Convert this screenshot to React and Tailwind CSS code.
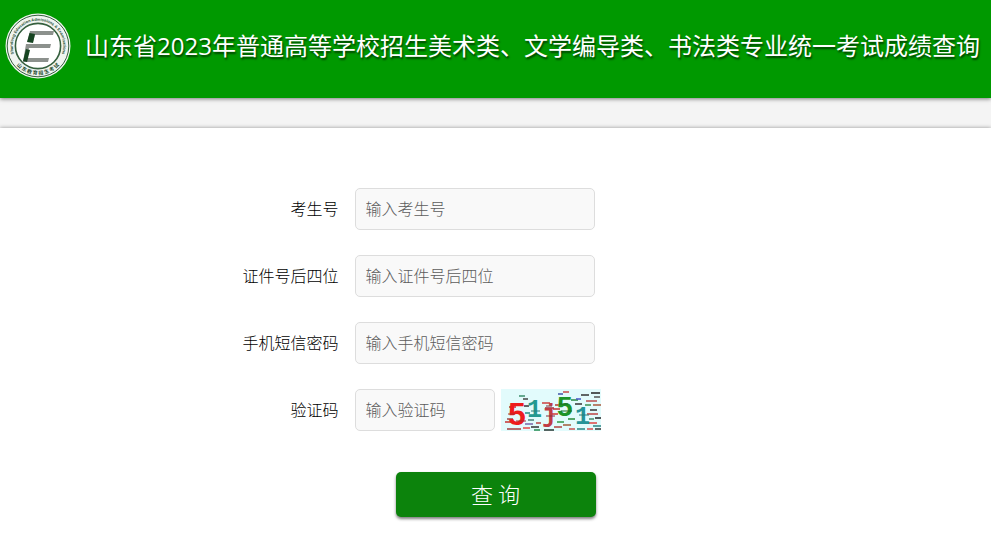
import React, { useState } from 'react';

const FIELDS = [
  { id: 'ksh', label: '考生号', placeholder: '输入考生号' },
  { id: 'zjh', label: '证件号后四位', placeholder: '输入证件号后四位' },
  { id: 'sms', label: '手机短信密码', placeholder: '输入手机短信密码', type: 'password' },
];

const labelClass = 'w-[143px] shrink-0 pb-[3px] text-right text-base font-light text-black';
const inputClass = 'h-[42px] rounded-[5px] border border-[#dddddd] bg-[#f9f9f9] px-[10px] pb-[3px] text-base font-light text-[#333333] placeholder:text-[#5c5c5c] focus:outline-none focus:border-[#009900]';

// noise strokes of the captcha: x, y, length, colour
const NOISE = [
  [18, 7, 6, '#3b8f6c'], [22, 10, 5, '#444'], [10, 15, 9, '#e2362f'], [8, 18, 7, '#a83a3a'], [23, 17, 5, '#333'],
  [41, 14, 8, '#cc4040'], [44, 19, 9, '#993344'], [24, 24, 5, '#248b83'],
  [6, 30, 6, '#9c4848'], [4, 33, 7, '#c43535'], [27, 31, 6, '#4b8278'], [24, 35, 8, '#7766aa'], [6, 40, 14, '#a33d3d'],
  [22, 39, 7, '#e44848'], [30, 38, 8, '#333'], [35, 34, 5, '#b84545'], [33, 41, 6, '#238a50'], [43, 41, 10, '#24332f'],
  [53, 38, 8, '#b34242'], [62, 36, 8, '#a05b38'], [56, 33, 7, '#2f9646'], [50, 25, 7, '#d43535'], [52, 20, 7, '#c52f2f'],
  [54, 16, 6, '#b33b2b'], [57, 5, 5, '#4055aa'], [62, 3, 6, '#c94848'], [70, 11, 7, '#288740'],
  [74, 15, 7, '#333'], [75, 10, 5, '#4455c4'], [80, 6, 8, '#333'], [90, 4, 9, '#222'], [85, 12, 11, '#b94b4b'],
  [93, 8, 6, '#555'], [84, 16, 6, '#3b9151'], [92, 16, 8, '#a9593b'], [89, 21, 7, '#333'],
  [86, 25, 11, '#bd4545'], [94, 29, 6, '#222'], [88, 30, 5, '#488a6c'], [87, 34, 9, '#e04444'], [92, 37, 8, '#2c8585'],
  [94, 40, 6, '#333'], [68, 40, 6, '#c75050'], [76, 40, 8, '#278484'], [86, 40, 6, '#d94d4d'], [67, 30, 7, '#248c38'],
];

function Logo() {
  return (
    <svg viewBox="0 0 66 66" className="size-[66px] shrink-0" role="img" aria-label="山东省教育招生考试院">
      <circle cx="33" cy="33" r="32.5" fill="#f0f4f0" />
      <circle cx="33" cy="33" r="30.8" fill="none" stroke="#345f3d" strokeWidth="1" />
      <circle cx="33" cy="33" r="22.6" fill="#ffffff" stroke="#345f3d" strokeWidth="1.6" />
      <defs>
        <path id="arc-top" d="M 9.5 42 A 25.2 25.2 0 1 1 56.5 42" />
        <path id="arc-bottom" d="M 4.2 33 A 28.8 28.8 0 0 0 61.8 33" />
      </defs>
      <text fontFamily="Liberation Sans, sans-serif" fontWeight="700" fontSize="4" fill="#264e30" textAnchor="middle">
        <textPath href="#arc-top" startOffset="50%">Shandong Education Admissions &amp; Examinations</textPath>
      </text>
      <text fontFamily="Noto Sans CJK SC, sans-serif" fontWeight="700" fontSize="5" fill="#264e30" textAnchor="middle">
        <textPath href="#arc-bottom" startOffset="50%">山 东 教 育 招 生 考 试</textPath>
      </text>
      {/* slanted emblem */}
      <path d="M25 18 H49 L48 22 H30 L28 29 H24 L22.5 28 Z" fill="#8c918d" />
      <path d="M21 31 H46 L45 35 H24 L22 45 H44 L43 49 H18 Z" fill="#8c918d" />
      <path d="M24.5 20 L30 21 L28 30 L22 29 Z M21 36 L25 37 L22 49 L18 48 Z" fill="#174522" />
    </svg>
  );
}

function Captcha() {
  return (
    <svg viewBox="0 0 100 42" className="h-[42px] w-[100px]" aria-hidden="true">
      <rect width="100" height="42" fill="#e2fbfc" />
      <g strokeWidth="1.5">
        {NOISE.map(([x, y, w, color]) => (
          <path key={`${x}-${y}`} d={`M${x} ${y}h${w}`} stroke={color} />
        ))}
      </g>
      <g fontFamily="Liberation Mono, monospace" fontWeight="700" fontSize="25">
        <text x="7" y="36" fontFamily="Liberation Sans, sans-serif" fontSize="32" fill="#ee1c1c">5</text>
        <text x="26" y="28" fill="#239990">1</text>
        <text x="41" y="33" fill="#c03c45">j</text>
        <text x="56" y="27" fontFamily="Liberation Sans, sans-serif" fontSize="28" fill="#1c9428">5</text>
        <text x="74" y="35" fill="#259398">1</text>
      </g>
      <g strokeWidth="1">
        <path d="M7 25h7M15 32h10" stroke="#a92f2f" />
        <path d="M30 22h9M78 26h10" stroke="#257d7b" />
        <path d="M45 27h9M45 17h6" stroke="#842f3b" />
        <path d="M58 15h9M60 22h11" stroke="#176d25" />
      </g>
    </svg>
  );
}

export default function App() {
  const [form, setForm] = useState({ ksh: '', zjh: '', sms: '', code: '' });

  const setFormField = (k, v) => setForm(p => ({ ...p, [k]: v }));

  return (
    <div className="flex min-h-screen flex-col bg-[#f4f4f4] font-['Noto_Sans_CJK_SC',sans-serif] text-[#333333]">
      {/* Header */}
      <header className="flex min-h-[98px] items-start gap-[14px] bg-[#009900] pt-[13px] pl-[5px] shadow-[0_1px_4px_rgba(0,0,0,0.5)]">
        <Logo />
        <h1 className="pt-[15px] font-['Open_Sans','Noto_Sans_CJK_SC',sans-serif] text-2xl leading-9 text-white [text-shadow:1px_2px_2px_rgba(0,0,0,0.6)]">
          山东省2023年普通高等学校招生美术类、文学编导类、书法类专业统一考试成绩查询
        </h1>
      </header>

      {/* Query form */}
      <main className="mt-[30px] grow bg-white pt-[60px] pb-[27px] shadow-[0_0_4px_rgba(0,0,0,0.4)]">
        <form className="mx-auto flex max-w-[600px] flex-col gap-[25px]" onSubmit={e => e.preventDefault()}>
          {FIELDS.map(f => (
            <div key={f.id} className="flex items-center gap-4">
              <label htmlFor={f.id} className={labelClass}>{f.label}</label>
              <input
                id={f.id}
                type={f.type || 'text'}
                className={`${inputClass} w-[240px]`}
                value={form[f.id]}
                onChange={e => setFormField(f.id, e.target.value)}
                placeholder={f.placeholder}
              />
            </div>
          ))}
          <div className="flex items-center gap-4">
            <label htmlFor="code" className={labelClass}>验证码</label>
            <div className="flex items-center gap-[6px]">
              <input
                id="code"
                type="text"
                className={`${inputClass} w-[140px]`}
                value={form.code}
                onChange={e => setFormField('code', e.target.value)}
                placeholder="输入验证码"
              />
              <button type="button" aria-label="刷新验证码" className="cursor-pointer">
                <Captcha />
              </button>
            </div>
          </div>
          <button
            type="submit"
            className="mx-auto mt-4 h-[45px] w-[200px] cursor-pointer rounded-[5px] bg-[#0c830c] pb-1 text-[22px] leading-8 font-light text-white shadow-[0_2px_3px_rgba(0,0,0,0.5)]"
          >
            查 询
          </button>
        </form>
      </main>
    </div>
  );
}
